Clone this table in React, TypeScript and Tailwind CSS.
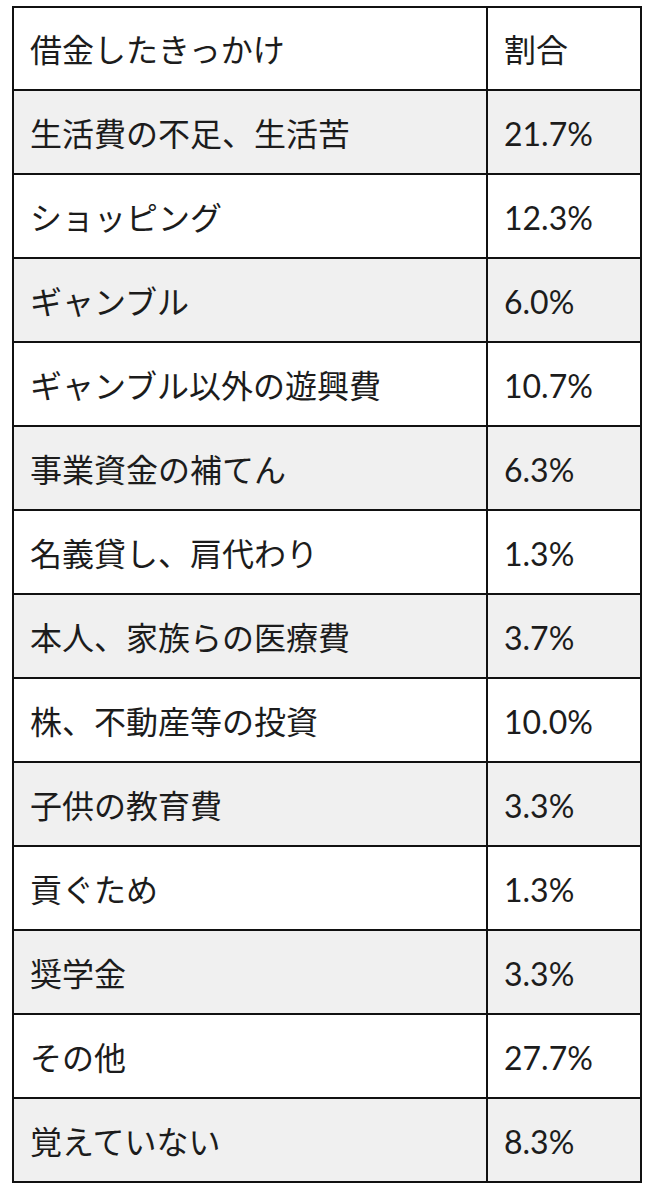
const rows: [string, string][] = [
  ["生活費の不足、生活苦", "21.7%"],
  ["ショッピング", "12.3%"],
  ["ギャンブル", "6.0%"],
  ["ギャンブル以外の遊興費", "10.7%"],
  ["事業資金の補てん", "6.3%"],
  ["名義貸し、肩代わり", "1.3%"],
  ["本人、家族らの医療費", "3.7%"],
  ["株、不動産等の投資", "10.0%"],
  ["子供の教育費", "3.3%"],
  ["貢ぐため", "1.3%"],
  ["奨学金", "3.3%"],
  ["その他", "27.7%"],
  ["覚えていない", "8.3%"],
];

const Row = ({ label, value, shaded, size }: { label: string; value: string; shaded: boolean; size: string }) => (
  <div className={`flex pt-[3px] ${size} ${shaded ? "bg-[#f0f0f0]" : "bg-white"}`}>
    <div className="w-[474px] flex items-center pl-4 border-r-2 border-[#111] -mt-[3px] pt-[3px]">{label}</div>
    <div className="flex-1 flex items-center pl-4">{value}</div>
  </div>
);

export default function App() {
  return (
    <div
      className="min-h-[1194px] bg-white pt-[6px] pl-[12px] text-[32px] leading-none text-[#1c1c1c]"
      style={{ fontFamily: 'Lato, "Noto Sans CJK JP", sans-serif' }}
    >
      <div className="w-[630px] border-2 border-[#111]">
        <Row label="借金したきっかけ" value="割合" shaded={false} size="h-[83px] border-b-2 border-[#111]" />
        {rows.map(([l, v], i) => (
          <Row
            key={l}
            label={l}
            value={v}
            shaded={i % 2 === 0}
            size={i === rows.length - 1 ? "h-[82px]" : "h-[84px] border-b-2 border-[#111]"}
          />
        ))}
      </div>
    </div>
  );
}
